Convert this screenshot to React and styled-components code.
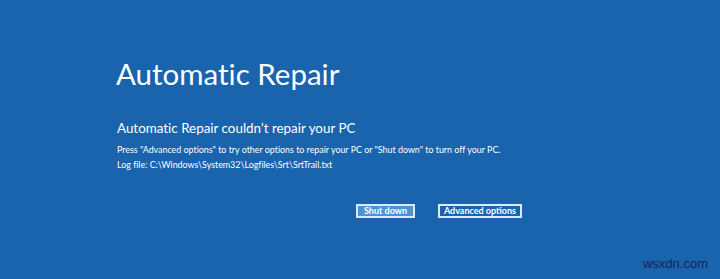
import styled, { createGlobalStyle } from "styled-components";

const Global = createGlobalStyle`
  html, body {
    margin: 0;
    padding: 0;
    background: #1a63ad;
  }
`

const Screen = styled.div`
  position: relative;
  width: 720px;
  height: 279px;
  background: #1a63ad;
  color: #ffffff;
  font-family: Lato, "Open Sans", sans-serif;
  font-variant-ligatures: none;
  box-sizing: border-box;
  padding: 54px 0 0 116px;
  overflow: hidden;
`

const Title = styled.h1`
  margin: 0;
  font-size: 29.5px;
  font-weight: 400;
  line-height: 40px;
`

const Heading = styled.h2`
  margin: 25px 0 0 1px;
  font-size: 13.4px;
  font-weight: 400;
  line-height: 18px;
`

const Info = styled.p`
  margin: 5px 0 0 1px;
  font-size: 8.9px;
  line-height: 15px;
`

const Actions = styled.div`
  display: flex;
  gap: 23px;
  margin: 32px 0 0 240px;
`

const Button = styled.button`
  box-sizing: border-box;
  font-family: inherit;
  font-size: 9px;
  font-weight: 700;
  color: #ffffff;
  background: ${p => (p.$primary ? "#4b93d4" : "#1a63ad")};
  border: 2px solid #dfeaf6;
  padding: 0;
  height: 14px;
  width: ${p => p.$w}px;
  line-height: 10px;
  cursor: pointer;
`

const Mark = styled.span`
  position: absolute;
  right: 12px;
  bottom: 8px;
  font-family: "Liberation Sans", Arial, sans-serif;
  font-size: 13px;
  color: #16264f;
`

const App = () => {
  return (
    <Screen>
      <Global />
      <Title>Automatic Repair</Title>
      <Heading>Automatic Repair couldn’t repair your PC</Heading>
      <Info>
        Press "Advanced options" to try other options to repair your PC or "Shut down" to turn off your PC.
        <br />
        Log file: C:\Windows\System32\Logfiles\Srt\SrtTrail.txt
      </Info>
      <Actions>
        <Button $primary $w={59}>Shut down</Button>
        <Button $w={84}>Advanced options</Button>
      </Actions>
      <Mark>wsxdn.com</Mark>
    </Screen>
  )
}

export default App;
